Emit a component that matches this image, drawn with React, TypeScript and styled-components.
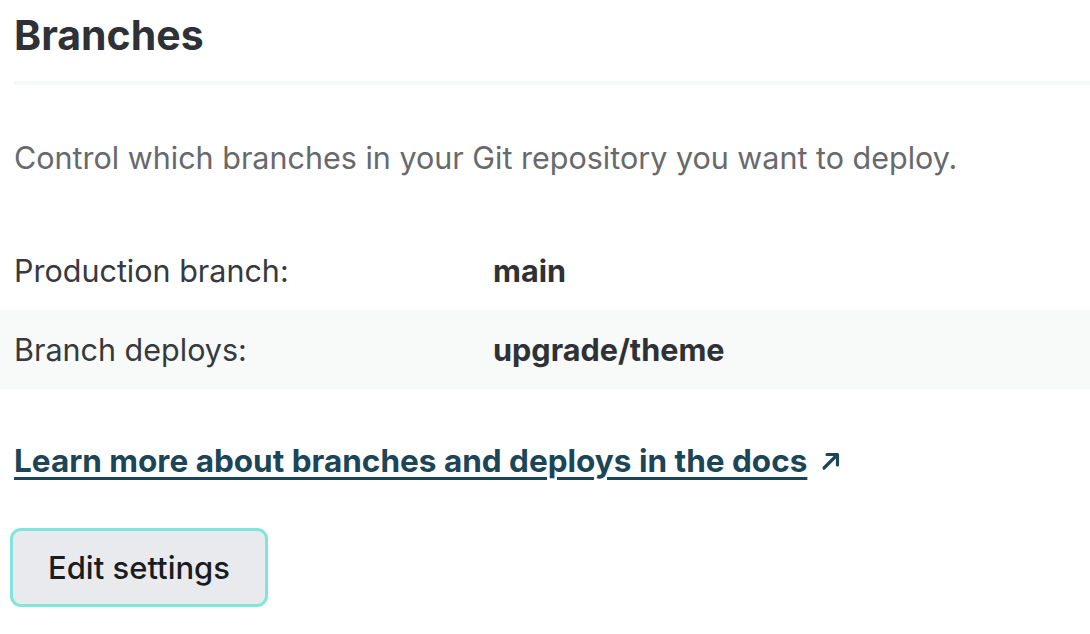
import React from "react";
import styled, { createGlobalStyle } from "styled-components";

const GlobalStyle = createGlobalStyle`
  html, body {
    margin: 0;
    padding: 0;
    background: #ffffff;
  }
  body {
    font-family: Inter, "Noto Sans", "Liberation Sans", sans-serif;
    color: #2f3237;
  }
`;

const Page = styled.section`
  width: 1090px;
  padding-top: 10px;
`;

const Header = styled.header`
  padding: 0 0 0 14px;
`;

const Title = styled.h1`
  margin: 0;
  font-size: 41px;
  line-height: 50px;
  font-weight: 700;
  color: #2e3136;
`;

const Divider = styled.hr`
  margin: 21px 0 0 14px;
  border: 0;
  height: 4px;
  background: #f6f7f7;
`;

const Description = styled.p`
  margin: 53px 0 0;
  padding-left: 14px;
  font-size: 30.5px;
  line-height: 40px;
  color: #67696d;
`;

const InfoList = styled.dl`
  margin: 53px 0 0;
`;

const InfoRow = styled.div<{ $shaded?: boolean }>`
  display: grid;
  grid-template-columns: 479px 1fr;
  align-items: center;
  height: 79px;
  padding-left: 14px;
  background: ${(p) => (p.$shaded ? "#f8f9f9" : "transparent")};
`;

const Label = styled.dt`
  font-size: 30.5px;
  color: #36393e;
`;

const Value = styled.dd`
  margin: 0;
  font-size: 30.6px;
  font-weight: 700;
  color: #2e3136;
`;

const DocsLink = styled.a`
  display: inline-flex;
  align-items: center;
  gap: 13px;
  margin: 52px 0 0 14px;
  font-size: 31.5px;
  line-height: 40px;
  font-weight: 700;
  color: #1c4558;
  text-decoration: none;

  span {
    text-decoration: underline;
    text-decoration-thickness: 3px;
    text-underline-offset: 5px;
  }
`;

const Actions = styled.div`
  margin-top: 47px;
  padding-left: 10px;
`;

const Button = styled.button`
  width: 258px;
  height: 79px;
  border: 3px solid #80e6dc;
  border-radius: 11px;
  background: #e9eaed;
  font-family: inherit;
  font-size: 31px;
  font-weight: 500;
  color: #191c20;
  cursor: pointer;
`;

const ArrowIcon = () => (
  <svg width="22" height="22" viewBox="0 0 22 22" fill="none">
    <path d="M4 18 L17 5" stroke="#1c4558" strokeWidth="3.2" strokeLinecap="round" />
    <path d="M7 4.5 H17.5 V15" stroke="#1c4558" strokeWidth="3.2" strokeLinecap="round" strokeLinejoin="round" />
  </svg>
);

const rows = [
  { label: "Production branch:", value: "main" },
  { label: "Branch deploys:", value: "upgrade/theme" },
];

export default function App() {
  return (
    <>
      <GlobalStyle />
      <Page>
        <Header>
          <Title>Branches</Title>
        </Header>
        <Divider />
        <Description>Control which branches in your Git repository you want to deploy.</Description>
        <InfoList>
          {rows.map((r, i) => (
            <InfoRow key={r.label} $shaded={i % 2 === 1}>
              <Label>{r.label}</Label>
              <Value>{r.value}</Value>
            </InfoRow>
          ))}
        </InfoList>
        <DocsLink href="#">
          <span>Learn more about branches and deploys in the docs</span>
          <ArrowIcon />
        </DocsLink>
        <Actions>
          <Button>Edit settings</Button>
        </Actions>
      </Page>
    </>
  );
}
